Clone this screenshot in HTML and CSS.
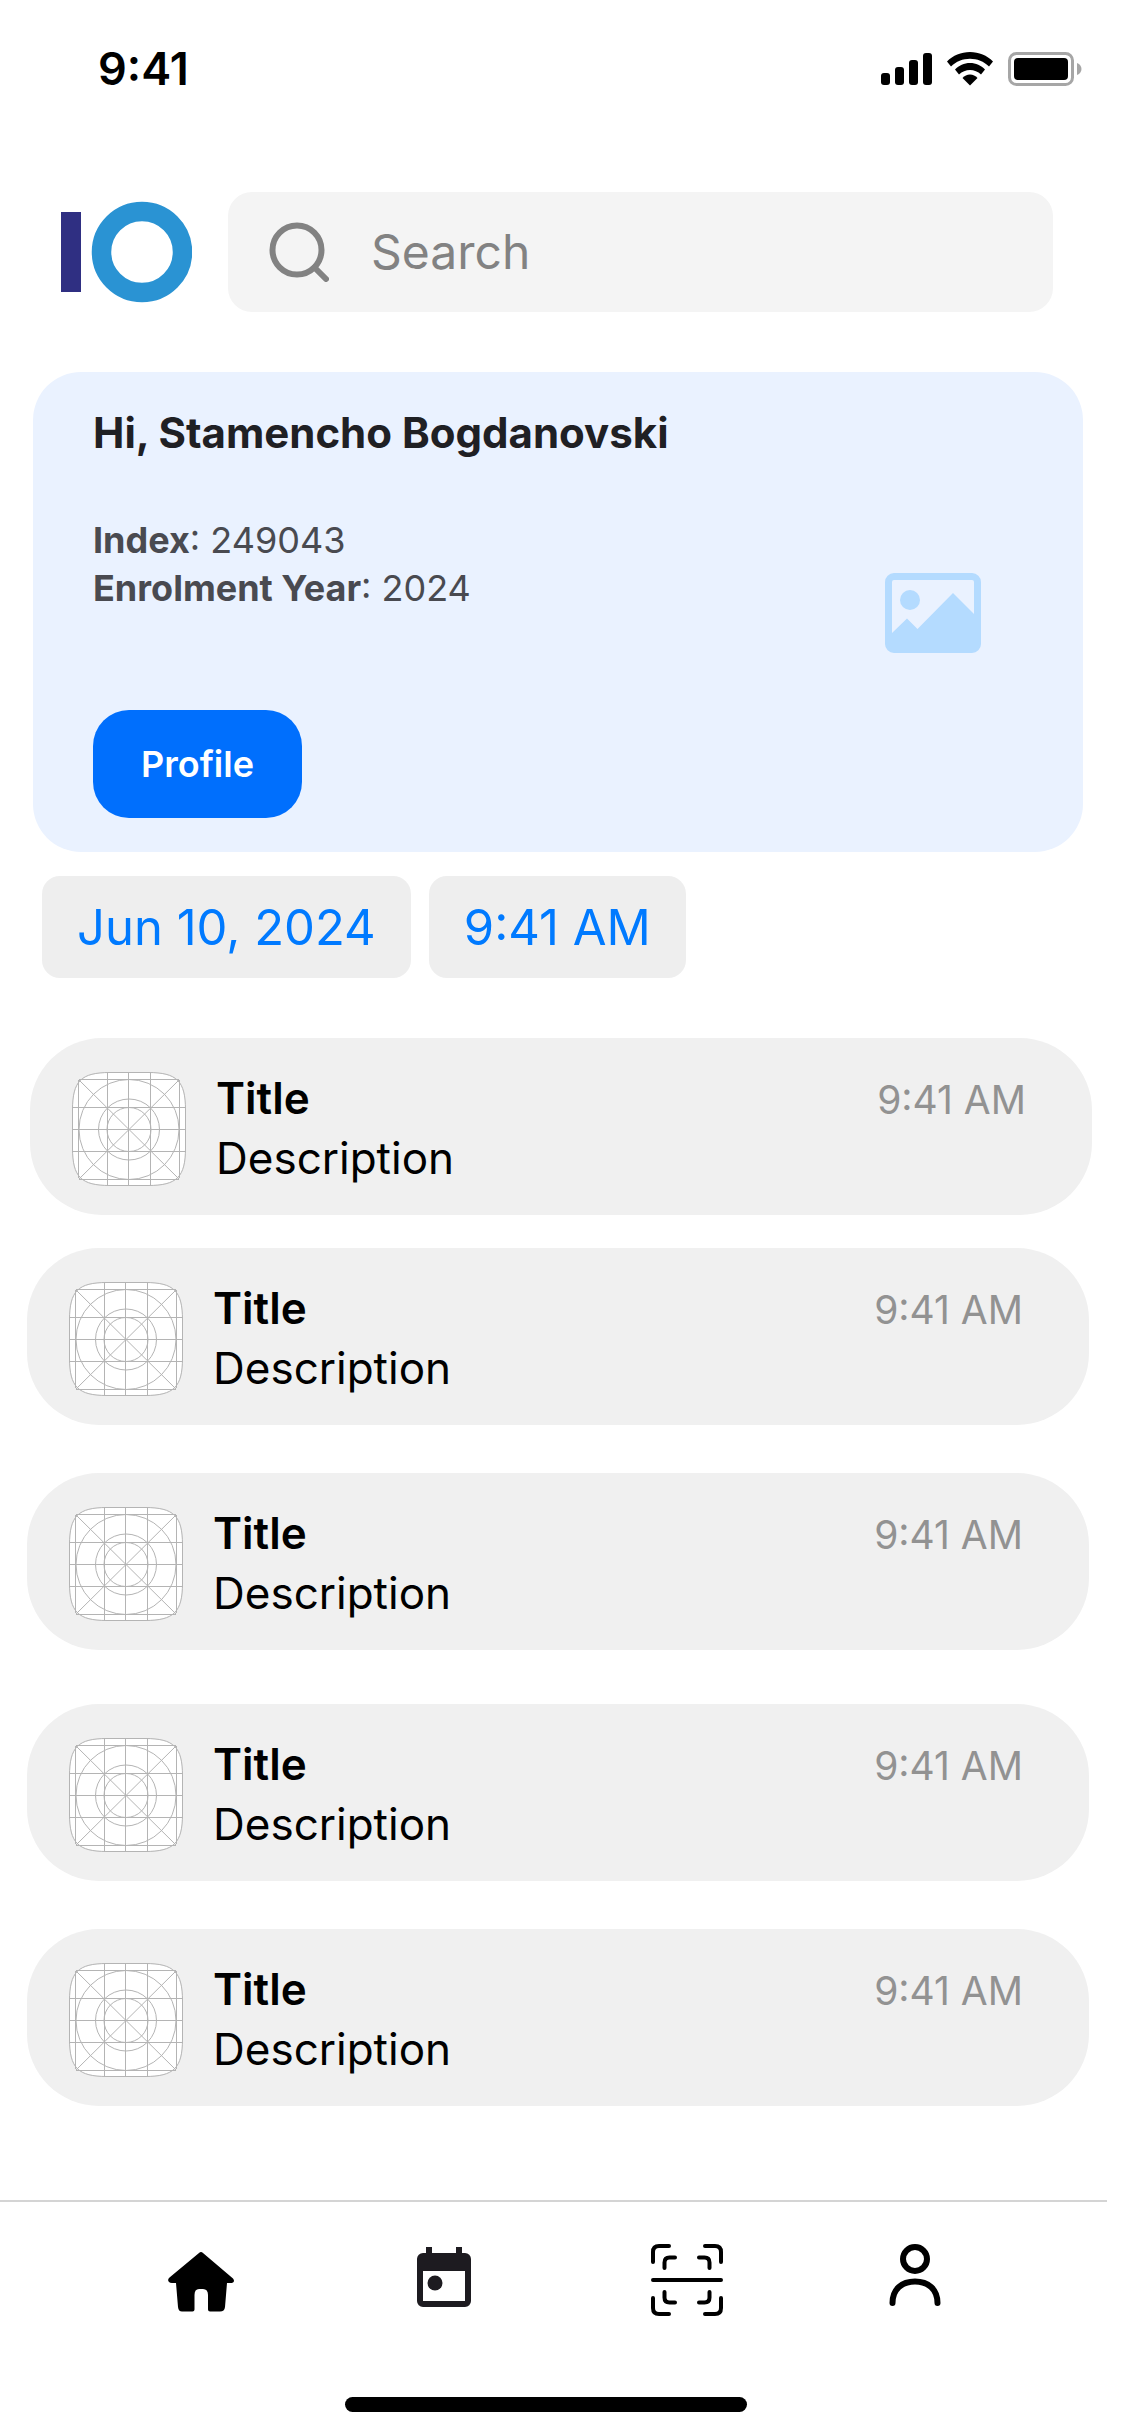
FILE: index.html
```html
<!DOCTYPE html>
<html lang="en">
<head>
<meta charset="utf-8">
<meta name="viewport" content="width=device-width, initial-scale=1">
<title>Student home</title>
<link rel="stylesheet" href="styles.css">
</head>
<body>
<svg class="defs" aria-hidden="true">
  <symbol id="app-grid" viewBox="0 0 114 114">
    <path d="M1 38C1 9 9 1 38 1H76C105 1 113 9 113 38V76C113 105 105 113 76 113H38C9 113 1 105 1 76Z" fill="#fff"/>
    <g fill="none" stroke="#b4b4b4" stroke-width="1">
      <path d="M.5 38C.5 9 9 .5 38 .5H76C105 .5 113.5 9 113.5 38V76C113.5 105 105 113.5 76 113.5H38C9 113.5 .5 105 .5 76Z"/>
      <path d="M6.500 8V106M35.500 0V114M56.500 0V114M78.500 0V114M107.500 8V106M7 7.500H107M0 35.500H114M0 57.500H114M0 79.500H114M7 107.500H107M7 8L107 107M107 8L7 107"/>
      <circle cx="57" cy="57.500" r="50"/>
      <circle cx="57" cy="57.500" r="30.500"/>
      <circle cx="57" cy="57.500" r="22"/>
    </g>
  </symbol>
</svg>

<header class="status-bar">
  <time class="status-time">9:41</time>
  <svg class="status-icons" viewBox="0 0 201 34" role="img" aria-label="Signal, Wi-Fi and battery">
    <g>
      <rect x="0" y="21" width="9" height="12" rx="3"/>
      <rect x="14" y="15" width="9" height="18" rx="3"/>
      <rect x="28" y="8" width="9" height="25" rx="3"/>
      <rect x="42" y="1" width="9" height="32" rx="3"/>
    </g>
    <path d="M89 0C98 0 106 3.500 112 9.500L108 14.500C103 9.500 96 6.800 89 6.800S75 9.500 70 14.500L66 9.500C72 3.500 80 0 89 0Z"/>
    <path d="M89 11C95 11 100 13.500 104 17.500L100 22.500C97 19.500 93 18 89 18S81 19.500 78 22.500L74 17.500C78 13.500 83 11 89 11Z"/>
    <path d="M89 22.500C92 22.500 94.500 23.800 96.500 26L89 33.500L81.500 26C83.500 23.800 86 22.500 89 22.500Z"/>
    <rect x="128.500" y="1.500" width="63" height="31" rx="7" fill="none" stroke="#a6a6a6" stroke-width="3"/>
    <rect x="133" y="6" width="54" height="22" rx="4"/>
    <path d="M196 11C199 12 200.500 14.500 200.500 17S199 22 196 23Z" fill="#a6a6a6"/>
  </svg>
</header>

<main class="content">
  <div class="top-row">
    <svg class="logo" viewBox="0 0 131 102" role="img" aria-label="IO">
      <rect x="0" y="11" width="20" height="80" fill="#2f2f82"/>
      <circle cx="81" cy="51" r="40.500" fill="none" stroke="#2a93d3" stroke-width="19.500"/>
    </svg>
    <label class="search">
      <svg class="search-icon" viewBox="0 0 60 60" aria-hidden="true">
        <circle cx="28" cy="28" r="24.500"/>
        <path d="M45.500 45.500L57 57"/>
      </svg>
      <input class="search-input" type="search" placeholder="Search" aria-label="Search">
    </label>
  </div>

  <section class="card">
    <div class="card-body">
      <h1 class="card-title">Hi, Stamencho Bogdanovski</h1>
      <p class="card-text"><b>Index</b>: 249043<br><b>Enrolment Year</b>: 2024</p>
      <button class="profile-button" type="button">Profile</button>
    </div>
    <svg class="picture" viewBox="0 0 96 80" role="img" aria-label="Picture">
      <path fill-rule="evenodd" d="M9 0H87A9 9 0 0 1 96 9V71A9 9 0 0 1 87 80H9A9 9 0 0 1 0 71V9A9 9 0 0 1 9 0ZM9 7A2 2 0 0 0 7 9V60L22 45.500L32.500 56L68 20L89 41V9A2 2 0 0 0 87 7Z"/>
      <circle cx="25" cy="27" r="10"/>
    </svg>
  </section>

  <div class="pickers">
    <button class="picker" type="button">Jun 10, 2024</button>
    <button class="picker" type="button">9:41 AM</button>
  </div>

  <section class="latest">
    <article class="item">
      <svg class="item-icon" aria-hidden="true"><use href="#app-grid"/></svg>
      <div class="item-text"><h2 class="item-title">Title</h2><p class="item-description">Description</p></div>
      <time class="item-time">9:41 AM</time>
    </article>
  </section>

  <section class="earlier">
    <article class="item">
      <svg class="item-icon" aria-hidden="true"><use href="#app-grid"/></svg>
      <div class="item-text"><h2 class="item-title">Title</h2><p class="item-description">Description</p></div>
      <time class="item-time">9:41 AM</time>
    </article>
    <article class="item">
      <svg class="item-icon" aria-hidden="true"><use href="#app-grid"/></svg>
      <div class="item-text"><h2 class="item-title">Title</h2><p class="item-description">Description</p></div>
      <time class="item-time">9:41 AM</time>
    </article>
  </section>

  <section class="earlier earlier-last">
    <article class="item">
      <svg class="item-icon" aria-hidden="true"><use href="#app-grid"/></svg>
      <div class="item-text"><h2 class="item-title">Title</h2><p class="item-description">Description</p></div>
      <time class="item-time">9:41 AM</time>
    </article>
    <article class="item">
      <svg class="item-icon" aria-hidden="true"><use href="#app-grid"/></svg>
      <div class="item-text"><h2 class="item-title">Title</h2><p class="item-description">Description</p></div>
      <time class="item-time">9:41 AM</time>
    </article>
  </section>
</main>

<footer class="bottom-bar">
  <nav class="tabs" aria-label="Main">
    <a class="tab" href="#home" aria-label="Home">
      <svg class="tab-icon" viewBox="0 0 72 72">
        <path d="M34 9Q36 7 38 9L68 34.500Q70 37 68 38.500Q67 39 65 39H62L60 63Q59.500 67.500 55 67.500H45Q43 67.500 43 65.500V51Q43 45 38 45H34Q29.500 45 29.500 51V65.500Q29.500 67.500 27.500 67.500H17Q13.500 67.500 13 63L11 39H7Q5 39 4 38Q2 36 4.500 33.500Z"/>
      </svg>
    </a>
    <a class="tab" href="#calendar" aria-label="Calendar">
      <svg class="tab-icon" viewBox="0 0 72 72">
        <path fill="#1d1b20" fill-rule="evenodd" d="M18 3H24V9H48V3H54V9H57A6 6 0 0 1 63 15V57A6 6 0 0 1 57 63H15A6 6 0 0 1 9 57V15A6 6 0 0 1 15 9H18ZM15 27V57H57V27Z"/>
        <circle cx="27" cy="39" r="7.500" fill="#1d1b20"/>
      </svg>
    </a>
    <a class="tab" href="#scan" aria-label="Scan">
      <svg class="tab-icon" viewBox="0 0 72 72">
        <path class="thin-line" d="M2 18V8Q2 2 8 2H18M54 2H64Q70 2 70 8V18M70 54V64Q70 70 64 70H54M18 70H8Q2 70 2 64V54M13.500 24V18.500Q13.500 13.500 18.500 13.500H24M48 13.500H53.500Q58.500 13.500 58.500 18.500V24M58.500 48V53.500Q58.500 58.500 53.500 58.500H48M24 58.500H18.500Q13.500 58.500 13.500 53.500V48M2 36H70"/>
      </svg>
    </a>
    <a class="tab" href="#profile" aria-label="Profile">
      <svg class="tab-icon" viewBox="0 0 72 72">
        <circle class="thick-line" cx="36" cy="15" r="12"/>
        <path class="thick-line" d="M13.500 59C13.500 45 23 37.500 36 37.500S58.500 45 58.500 59"/>
      </svg>
    </a>
  </nav>
  <div class="home-area">
    <div class="home-indicator"></div>
  </div>
</footer>
</body>
</html>
```
FILE: styles.css
```css
* {
  box-sizing: border-box;
}

body {
  margin: 0;
  min-height: 100vh;
  display: flex;
  flex-direction: column;
  background: #fff;
  color: #000;
  font-family: Inter, "Liberation Sans", sans-serif;
}

h1,
h2,
p {
  margin: 0;
}

button {
  border: 0;
  font-family: inherit;
}

.defs {
  display: none;
}

.status-bar {
  display: flex;
  align-items: center;
  justify-content: space-between;
  padding: 39px 43px 39px 98px;
}

.status-time {
  font-size: 45px;
  line-height: 60px;
  font-weight: 600;
}

.status-icons {
  width: 201px;
  height: 34px;
}

.content {
  flex: 1;
  padding-top: 54px;
}

.top-row {
  display: flex;
  align-items: center;
  gap: 36px;
  padding: 0 72px 0 61px;
}

.logo {
  flex: none;
  width: 131px;
  height: 102px;
}

.search {
  flex: 1;
  min-width: 0;
  display: flex;
  align-items: center;
  gap: 42px;
  height: 120px;
  padding: 0 41px;
  border-radius: 24px;
  background: #f4f4f4;
}

.search-icon {
  flex: none;
  width: 60px;
  height: 60px;
  fill: none;
  stroke: #828282;
  stroke-width: 6;
  stroke-linecap: round;
}

.search-input {
  flex: 1;
  min-width: 0;
  padding: 0;
  border: 0;
  outline: 0;
  background: none;
  color: #000;
  font-family: inherit;
  font-size: 48px;
  line-height: 60px;
}

.search-input::placeholder {
  color: #828282;
  opacity: 1;
}

.card {
  display: flex;
  align-items: center;
  justify-content: space-between;
  margin: 60px 42px 0 33px;
  padding: 35px 102px 34px 60px;
  border-radius: 48px;
  background: #eaf2ff;
}

.card-body {
  display: flex;
  flex-direction: column;
  align-items: flex-start;
}

.card-title {
  color: #1f2024;
  font-size: 42px;
  line-height: 52px;
  font-weight: 700;
}

.card-text {
  margin-top: 57px;
  color: #494a50;
  font-size: 36px;
  line-height: 48px;
}

.profile-button {
  margin-top: 98px;
  padding: 30px 48px;
  border-radius: 36px;
  background: #006ffd;
  color: #fff;
  font-size: 36px;
  line-height: 48px;
  font-weight: 600;
}

.picture {
  flex: none;
  width: 96px;
  height: 80px;
  fill: #b4dbff;
}

.pickers {
  display: flex;
  gap: 18px;
  padding: 24px 42px 0;
}

.picker {
  padding: 22px 35px 20px;
  border-radius: 18px;
  background: #eee;
  color: #007aff;
  font-size: 49px;
  line-height: 60px;
}

.latest {
  padding: 60px 33px 0 30px;
}

.earlier {
  display: grid;
  gap: 48px;
  padding: 33px 36px 0 27px;
}

.earlier-last {
  padding-top: 54px;
}

.item {
  display: flex;
  align-items: flex-start;
  padding: 30px 66px 27px 42px;
  border-radius: 72px;
  background: #f0f0f0;
}

.item-icon {
  flex: none;
  width: 114px;
  height: 114px;
  margin-top: 4px;
}

.item-text {
  flex: 1;
  margin-left: 30px;
  font-size: 44px;
  line-height: 60px;
}

.item-title {
  font-size: 44px;
  line-height: 60px;
  font-weight: 600;
}

.item-time {
  color: #929292;
  font-size: 39px;
  line-height: 64px;
}

.bottom-bar {
  padding: 36px 18px 24px 0;
}

.tabs {
  display: grid;
  grid-template-columns: 242fr 244fr 242fr 214fr;
  padding: 42px 85px 0 80px;
  border-top: 2px solid #d4d4d4;
}

.tab {
  display: flex;
  justify-content: center;
  color: #000;
}

.tab-icon {
  width: 72px;
  height: 72px;
}

.thin-line,
.thick-line {
  fill: none;
  stroke: #000;
  stroke-linecap: round;
}

.thin-line {
  stroke-width: 4;
}

.thick-line {
  stroke-width: 6;
}

.home-area {
  display: flex;
  justify-content: center;
  padding: 81px 15px 0 0;
}

.home-indicator {
  width: 402px;
  height: 15px;
  border-radius: 8px;
  background: #000;
}
```
